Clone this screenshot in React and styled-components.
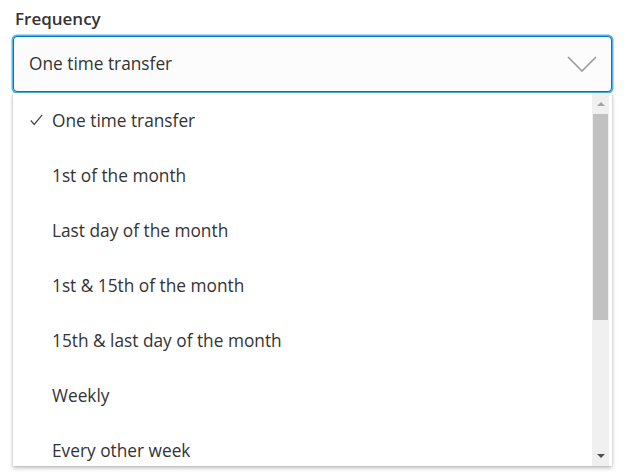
import React from 'react'
import styled, { createGlobalStyle } from 'styled-components'

const options = [
    'One time transfer',
    '1st of the month',
    'Last day of the month',
    '1st & 15th of the month',
    '15th & last day of the month',
    'Weekly',
    'Every other week',
]

const App = () => {
    const selected = options[0]
    return (
        <>
            <GlobalStyle />
            <Page>
                <Field>
                    <Label>Frequency</Label>
                    <SelectBox>
                        <Value>{selected}</Value>
                        <Chevron viewBox="0 0 30 16">
                            <polyline points="1,1 15,15 29,1" fill="none" stroke="#9a9a9a" strokeWidth="1.6" />
                        </Chevron>
                    </SelectBox>
                    <Menu>
                        <List>
                            {options.map((opt) => (
                                <Item key={opt}>
                                    <CheckSlot>
                                        {opt === selected && (
                                            <svg width="13" height="12" viewBox="0 0 13 12">
                                                <polyline points="0.8,6.5 4.2,10.5 12.2,0.8" fill="none" stroke="#444" strokeWidth="1.2" />
                                            </svg>
                                        )}
                                    </CheckSlot>
                                    {opt}
                                </Item>
                            ))}
                        </List>
                        <Scrollbar>
                            <Arrow $up />
                            <Track>
                                <Thumb />
                            </Track>
                            <Arrow />
                        </Scrollbar>
                    </Menu>
                </Field>
                <Underneath />
            </Page>
        </>
    )
}

export default App

const GlobalStyle = createGlobalStyle`
    body {
        margin: 0;
        background: #fff;
        font-family: "Open Sans", "Noto Sans", sans-serif;
        color: #333;
    }
`;

const Page = styled.div`
    padding: 7px 22px 0 13px;
    width: 634px;
    height: 474px;
    box-sizing: border-box;
    overflow: hidden;
`;

const Field = styled.div`
    position: relative;
`;

const Label = styled.div`
    font-size: 17px;
    font-weight: 600;
    color: #333;
    padding-left: 2px;
    line-height: 23px;
    margin-bottom: 6px;
`;

const SelectBox = styled.div`
    display: flex;
    align-items: center;
    justify-content: space-between;
    height: 56px;
    box-sizing: border-box;
    padding: 0 14px 0 15px;
    background: #fcfcfc;
    border: 1.5px solid #0a72c6;
    border-radius: 4px;
    box-shadow: 0 0 0 1.5px #55b4f2;
`;

const Value = styled.span`
    font-size: 17.3px;
    color: #333;
    padding-bottom: 1px;
`;

const Chevron = styled.svg`
    width: 30px;
    height: 16px;
`;

const Menu = styled.div`
    position: absolute;
    left: 0;
    right: 0;
    top: 86px;
    height: 373px;
    display: flex;
    background: #fff;
    box-shadow: 0 2px 4px rgba(0, 0, 0, 0.25), 0 0 2px rgba(0, 0, 0, 0.15);
    z-index: 2;
`;

const List = styled.ul`
    flex: 1;
    list-style: none;
    margin: 0;
    padding: 0;
    overflow: hidden;
`;

const Item = styled.li`
    display: flex;
    align-items: center;
    height: 55px;
    font-size: 17.3px;
    color: #333;
    padding-bottom: 1px;
    box-sizing: border-box;
`;

const CheckSlot = styled.span`
    display: flex;
    align-items: center;
    width: 39px;
    padding-left: 17px;
    box-sizing: border-box;
`;

const Scrollbar = styled.div`
    width: 17px;
    margin-right: 3px;
    background: #f0f0f0;
    display: flex;
    flex-direction: column;
`;

const Track = styled.div`
    flex: 1;
    padding: 0 1px;
`;

const Thumb = styled.div`
    height: 206px;
    background: #c1c1c1;
`;

const Arrow = styled.div`
    height: 21px;
    display: flex;
    align-items: center;
    justify-content: center;
    &::before {
        content: '';
        border-left: 4px solid transparent;
        border-right: 4px solid transparent;
        ${(p) => (p.$up ? 'border-bottom: 4px solid #a3a3a3;' : 'border-top: 4px solid #505050;')}
    }
`;

const Underneath = styled.div`
    margin-top: 301px;
    height: 48px;
    border: 1px solid #c8c8c8;
    border-radius: 4px;
`;
